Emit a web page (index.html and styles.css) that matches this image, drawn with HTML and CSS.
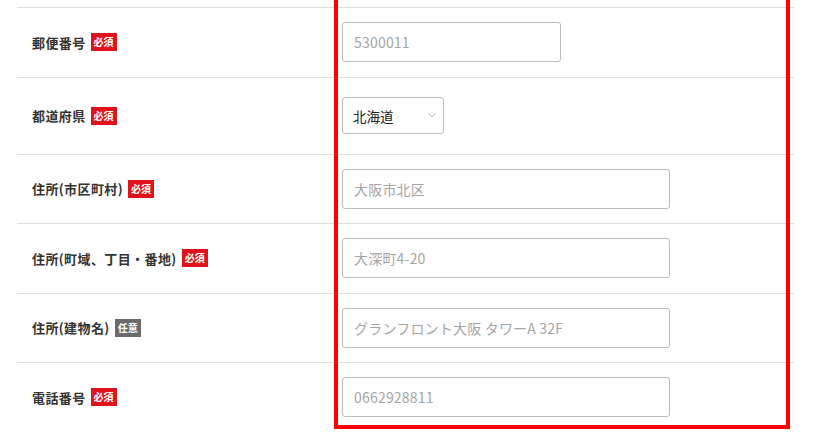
FILE: index.html
```html
<!DOCTYPE html>
<html lang="ja">
<head>
<meta charset="utf-8">
<link rel="stylesheet" href="styles.css">
</head>
<body>
<div class="form">
  <div class="row">
    <div class="label">郵便番号<span class="badge">必須</span></div>
    <div class="field"><input class="input input-short" type="text" placeholder="5300011"></div>
  </div>
  <div class="row row-select">
    <div class="label">都道府県<span class="badge">必須</span></div>
    <div class="field">
      <div class="select-wrap">
        <select class="select"><option>北海道</option></select>
        <svg class="chev" width="8" height="5" viewBox="0 0 8 5"><path d="M0.5 0.5 L4 4 L7.5 0.5" fill="none" stroke="#b5b5b5" stroke-width="1"/></svg>
      </div>
    </div>
  </div>
  <div class="row">
    <div class="label">住所(市区町村)<span class="badge">必須</span></div>
    <div class="field"><input class="input" type="text" placeholder="大阪市北区"></div>
  </div>
  <div class="row">
    <div class="label">住所(町域、丁目・番地)<span class="badge">必須</span></div>
    <div class="field"><input class="input" type="text" placeholder="大深町4-20"></div>
  </div>
  <div class="row">
    <div class="label">住所(建物名)<span class="badge badge-opt">任意</span></div>
    <div class="field"><input class="input" type="text" placeholder="グランフロント大阪 タワーA 32F"></div>
  </div>
  <div class="row row-last">
    <div class="label">電話番号<span class="badge">必須</span></div>
    <div class="field"><input class="input" type="text" placeholder="0662928811"></div>
  </div>
  <div class="highlight"></div>
</div>
</body>
</html>
```

FILE: styles.css
```css
html, body {
  margin: 0;
  padding: 0;
  background: #fff;
}
body {
  font-family: "Noto Sans CJK JP", "Noto Sans", sans-serif;
  color: #333;
  overflow: hidden;
}
.form {
  position: relative;
  margin: 7px 20px 0 17px;
}
.row {
  display: flex;
  align-items: center;
  border-top: 1px solid #dedede;
  padding: 14.25px 0;
}
.row-select {
  padding: 19.5px 0;
}
.row-last {
  border-bottom: 1px solid #dedede;
}
.label {
  width: 310px;
  box-sizing: border-box;
  padding-left: 15px;
  font-size: 13px;
  font-weight: 700;
  letter-spacing: 0.4px;
  color: #333;
  display: flex;
  align-items: center;
}
.badge {
  display: inline-block;
  margin-left: 5px;
  background: #e0121b;
  color: #fff;
  font-size: 10px;
  font-weight: 700;
  letter-spacing: 0;
  line-height: 18px;
  height: 18px;
  padding: 0 3px;
}
.badge-opt {
  background: #6b6b6b;
}
.field {
  padding-left: 15px;
  flex: 1;
}
.input {
  display: block;
  box-sizing: border-box;
  width: 328px;
  height: 40px;
  border: 1px solid #bcbcbc;
  border-radius: 3px;
  padding: 0 11px;
  font-family: "Noto Sans CJK JP", sans-serif;
  font-size: 14px;
  letter-spacing: 0.2px;
  color: #333;
  outline: none;
}
.input-short {
  width: 219px;
}
.input::placeholder {
  color: #a5a5a5;
}
.select-wrap {
  position: relative;
  width: 102px;
}
.select {
  -webkit-appearance: none;
  appearance: none;
  display: block;
  box-sizing: border-box;
  width: 102px;
  height: 37px;
  border: 1px solid #bcbcbc;
  border-radius: 3px;
  background: #fff;
  padding: 0 10px;
  font-family: "Noto Sans CJK JP", sans-serif;
  font-size: 13.5px;
  color: #222;
  outline: none;
}
.chev {
  position: absolute;
  right: 8px;
  top: 16px;
}
.highlight {
  position: absolute;
  left: 317px;
  top: -30px;
  width: 456px;
  bottom: 4px;
  box-sizing: border-box;
  border: 4px solid #ff0000;
  pointer-events: none;
}
```
